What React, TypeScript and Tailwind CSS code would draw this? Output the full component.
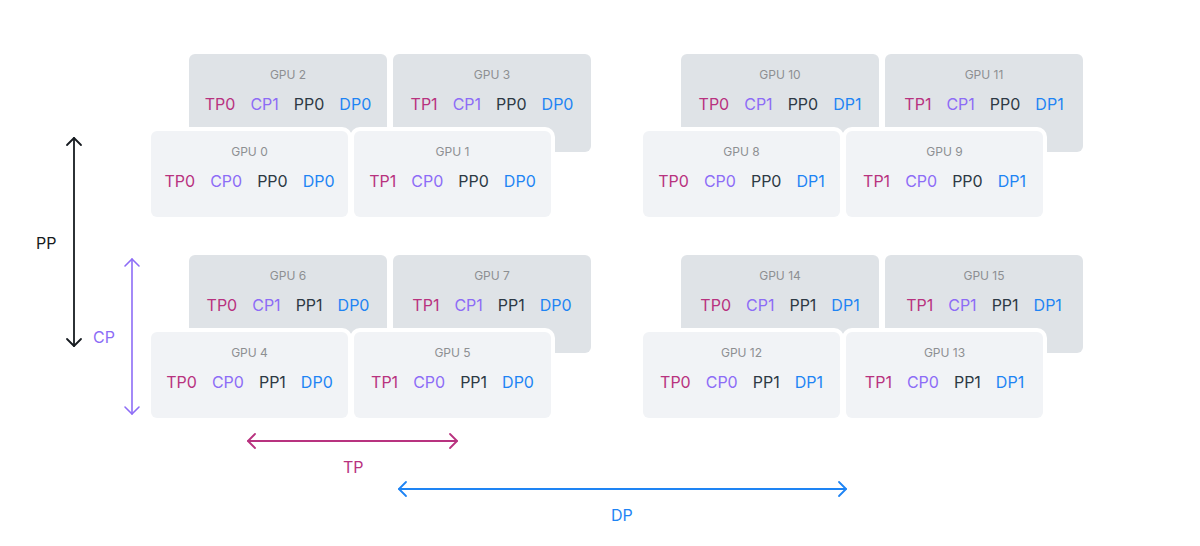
import type { ReactElement } from 'react';

interface Gpu {
  readonly id: number;
  readonly tp: number;
  readonly cp: number;
  readonly pp: number;
  readonly dp: number;
}

const FONT = { fontFamily: 'Inter, "Noto Sans", sans-serif' };

// each group: back row (cp1) sits behind and up-right of the front row (cp0)
const GROUPS: readonly { back: Gpu[]; front: Gpu[] }[][] = [
  [
    {
      back: [
        { id: 2, tp: 0, cp: 1, pp: 0, dp: 0 },
        { id: 3, tp: 1, cp: 1, pp: 0, dp: 0 },
      ],
      front: [
        { id: 0, tp: 0, cp: 0, pp: 0, dp: 0 },
        { id: 1, tp: 1, cp: 0, pp: 0, dp: 0 },
      ],
    },
    {
      back: [
        { id: 10, tp: 0, cp: 1, pp: 0, dp: 1 },
        { id: 11, tp: 1, cp: 1, pp: 0, dp: 1 },
      ],
      front: [
        { id: 8, tp: 0, cp: 0, pp: 0, dp: 1 },
        { id: 9, tp: 1, cp: 0, pp: 0, dp: 1 },
      ],
    },
  ],
  [
    {
      back: [
        { id: 6, tp: 0, cp: 1, pp: 1, dp: 0 },
        { id: 7, tp: 1, cp: 1, pp: 1, dp: 0 },
      ],
      front: [
        { id: 4, tp: 0, cp: 0, pp: 1, dp: 0 },
        { id: 5, tp: 1, cp: 0, pp: 1, dp: 0 },
      ],
    },
    {
      back: [
        { id: 14, tp: 0, cp: 1, pp: 1, dp: 1 },
        { id: 15, tp: 1, cp: 1, pp: 1, dp: 1 },
      ],
      front: [
        { id: 12, tp: 0, cp: 0, pp: 1, dp: 1 },
        { id: 13, tp: 1, cp: 0, pp: 1, dp: 1 },
      ],
    },
  ],
];

function GpuCard({ gpu, front }: { gpu: Gpu; front: boolean }): ReactElement {
  return (
    <div
      className={
        front
          ? 'relative flex h-[86px] w-[197px] flex-col items-center rounded-md bg-[#f1f3f6] pt-[14px] ring-4 ring-white'
          : 'flex h-[98px] w-[198px] flex-col items-center rounded-md bg-[#dfe3e7] pt-[14px]'
      }
    >
      <div className="text-[12px] leading-[14px] text-[#8d8f92]">GPU {gpu.id}</div>
      <div className="mt-[12px] flex gap-[15px] text-[16px] leading-[20px]">
        <span className="text-[#b8327f]">TP{gpu.tp}</span>
        <span className="text-[#8d6cf6]">CP{gpu.cp}</span>
        <span className="text-[#2d3944]">PP{gpu.pp}</span>
        <span className="text-[#1e84f4]">DP{gpu.dp}</span>
      </div>
    </div>
  );
}

function Arrows(): ReactElement {
  return (
    <svg
      className="pointer-events-none absolute left-0 top-0"
      width={1200}
      height={546}
      fill="none"
      strokeLinecap="round"
      strokeLinejoin="round"
    >
      {/* PP */}
      <g stroke="#161b20" strokeWidth={1.8}>
        <path d="M74 138V346" />
        <path d="M67 145l7-7 7 7" />
        <path d="M67 339l7 7 7-7" />
      </g>
      {/* CP */}
      <g stroke="#8d6cf6" strokeWidth={1.6}>
        <path d="M132 259V414" />
        <path d="M125 266l7-7 7 7" />
        <path d="M125 407l7 7 7-7" />
      </g>
      {/* TP */}
      <g stroke="#b8327f" strokeWidth={1.8}>
        <path d="M248 441H457" />
        <path d="M255 434l-7 7 7 7" />
        <path d="M450 434l7 7-7 7" />
      </g>
      {/* DP */}
      <g stroke="#1e84f4" strokeWidth={1.8}>
        <path d="M399 489H846" />
        <path d="M406 482l-7 7 7 7" />
        <path d="M839 482l7 7-7 7" />
      </g>
    </svg>
  );
}

export default function App(): ReactElement {
  return (
    <div className="relative h-[546px] w-[1200px] overflow-hidden bg-white" style={FONT}>
      <div className="flex flex-col gap-[38px] pl-[151px] pt-[54px]">
        {GROUPS.map((row, ri) => (
          <div key={ri} className="flex gap-[52px]">
            {row.map((g, gi) => (
              <div key={gi} className="flex flex-col">
                <div className="ml-[38px] flex gap-[6px]">
                  {g.back.map((gpu) => (
                    <GpuCard key={gpu.id} gpu={gpu} front={false} />
                  ))}
                </div>
                <div className="mt-[-21px] flex gap-[6px]">
                  {g.front.map((gpu) => (
                    <GpuCard key={gpu.id} gpu={gpu} front />
                  ))}
                </div>
              </div>
            ))}
          </div>
        ))}
      </div>

      <Arrows />

      <span className="absolute left-[36px] top-[233px] text-[16px] leading-[20px] text-[#161b20]">PP</span>
      <span className="absolute left-[93px] top-[327px] text-[16px] leading-[20px] text-[#8d6cf6]">CP</span>
      <span className="absolute left-[343px] top-[457px] text-[16px] leading-[20px] text-[#b8327f]">TP</span>
      <span className="absolute left-[611px] top-[505px] text-[16px] leading-[20px] text-[#1e84f4]">DP</span>
    </div>
  );
}
